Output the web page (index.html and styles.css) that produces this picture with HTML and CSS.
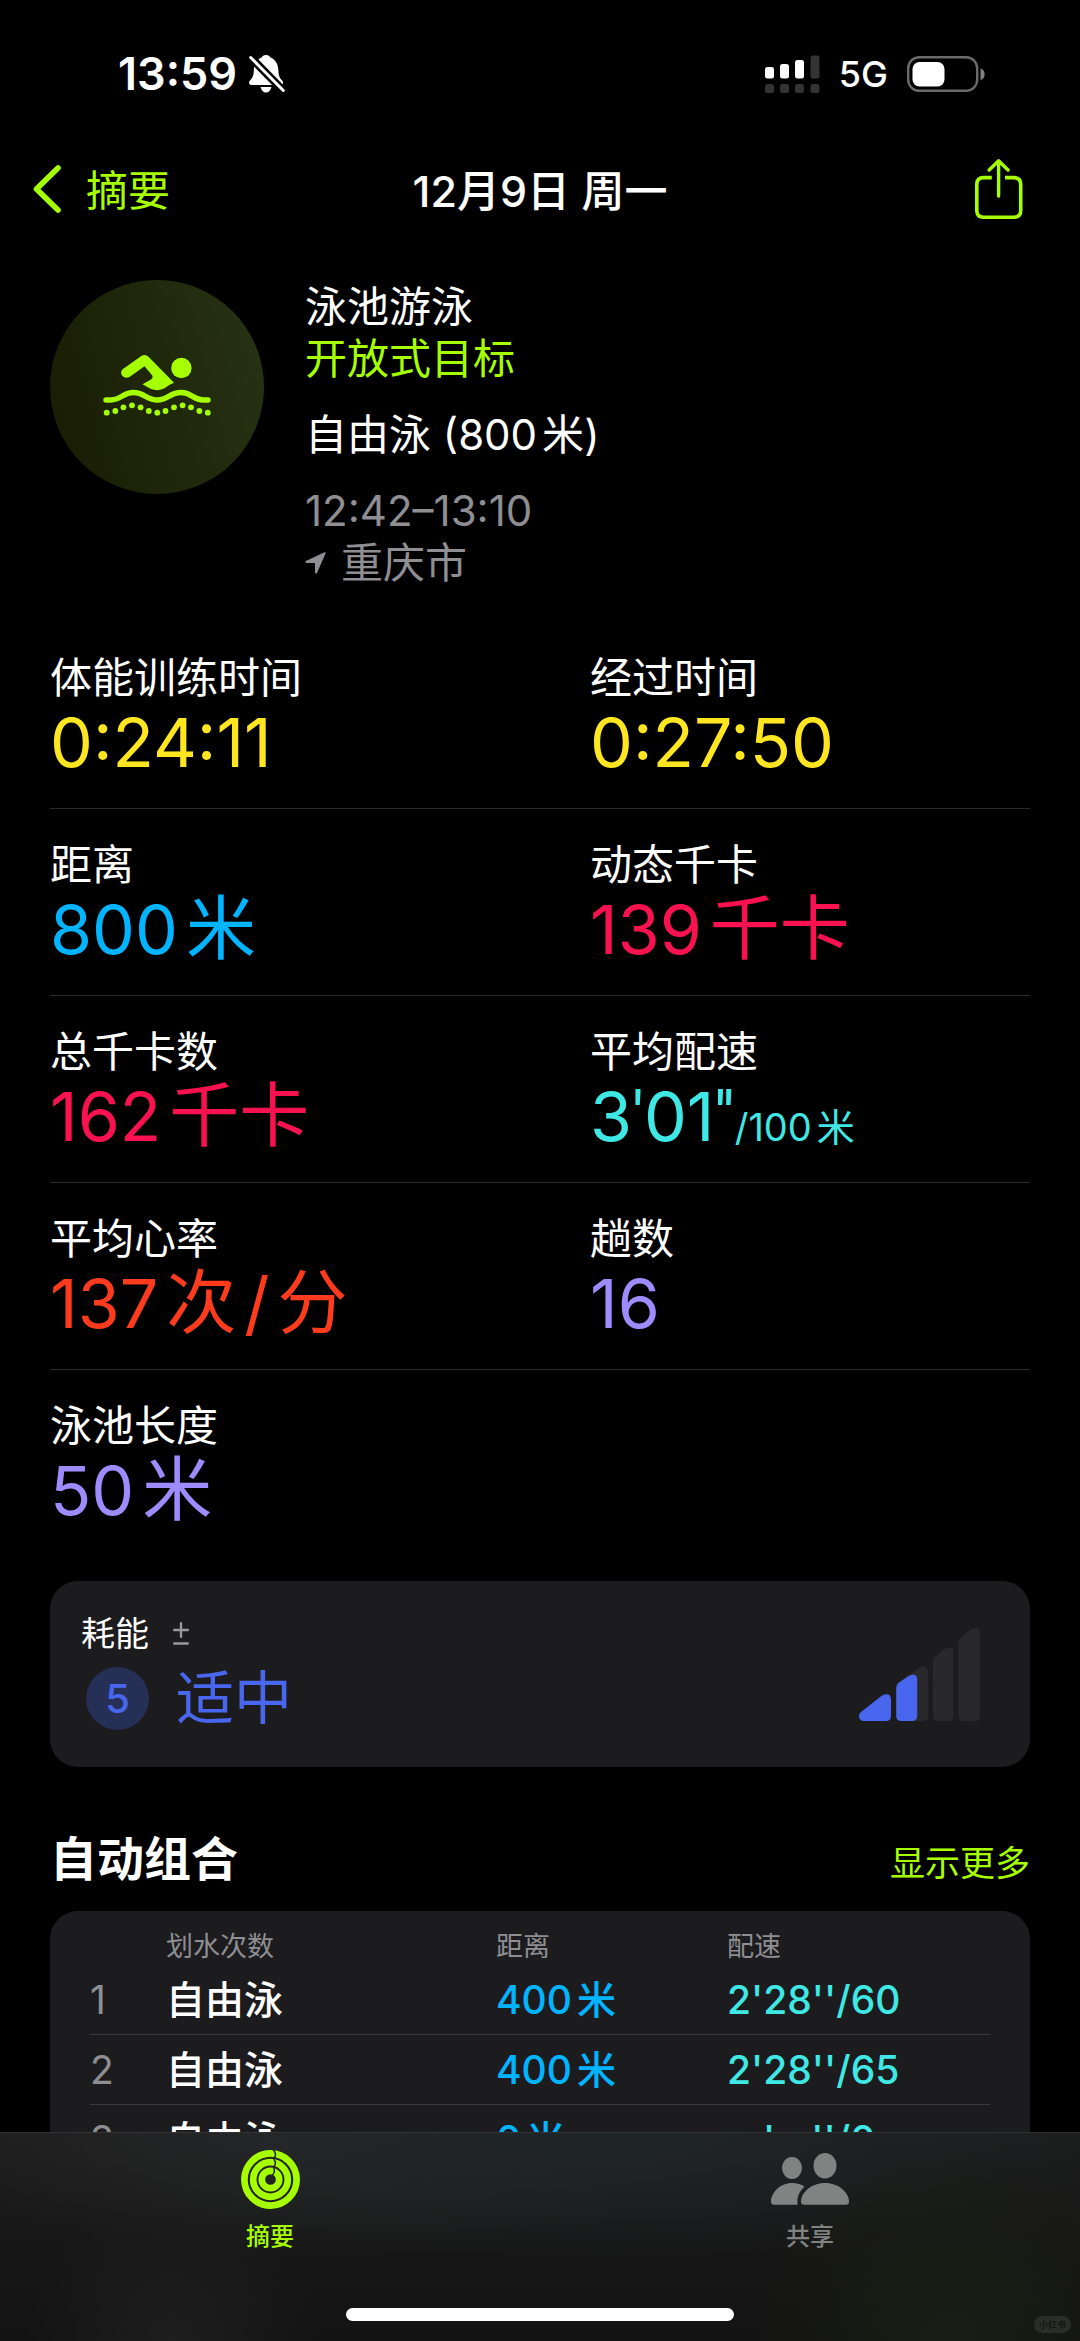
FILE: index.html
```html
<!DOCTYPE html>
<html lang="zh-CN">
<head>
<meta charset="utf-8">
<meta name="viewport" content="width=device-width, initial-scale=1">
<title>12月9日 周一</title>
<link rel="stylesheet" href="styles.css">
</head>
<body>
<div class="app">
  <div class="status">
    <div class="status-side">
      <span class="clock">13:59</span>
      <svg width="36" height="38" viewBox="0 0 36 38" aria-hidden="true">
        <path d="M17 0c3 0 4 1.500 4.500 2.500 5 2 7.500 6.500 7.800 12 .3 6 1.200 8.500 3.800 11 1.500 1.500 1.400 4.500-1.300 4.500H2.500C-.5 30-.4 27 1 25.500c2.600-2.500 3.700-5 3.900-11 .2-5.500 3-10 7.600-12C13 1.500 14 0 17 0z" fill="#fff"/>
        <path d="M11.500 32h11c-.8 3.500-2.800 5.500-5.500 5.500s-4.700-2-5.500-5.500z" fill="#fff"/>
        <path d="M-1 -0.500L37 38.500" stroke="#000" stroke-width="8"/>
        <path d="M1.700 2.500L34.300 35.500" stroke="#fff" stroke-width="3" stroke-linecap="round"/>
      </svg>
    </div>
    <div class="status-side status-right">
      <svg width="55" height="39" viewBox="0 0 55 39" aria-hidden="true">
        <g fill="#fff"><rect y="12" width="9" height="11.500" rx="2.500"/><rect x="15" y="9" width="9" height="14.500" rx="2.500"/><rect x="30" y="5" width="9" height="18.500" rx="2.500"/></g>
        <g fill="#333"><rect x="45.500" y="0.500" width="9" height="23" rx="2.500"/><rect y="29" width="9" height="9" rx="2.500"/><rect x="15" y="29" width="9" height="9" rx="2.500"/><rect x="30" y="29" width="9" height="9" rx="2.500"/><rect x="45.500" y="29" width="9" height="9" rx="2.500"/></g>
      </svg>
      <span class="network">5G</span>
      <svg width="79" height="36" viewBox="0 0 79 36" aria-hidden="true">
        <rect x="1.200" y="1.200" width="69" height="33.600" rx="11" fill="none" stroke="#6a6a6a" stroke-width="2.400"/>
        <rect x="5.500" y="6" width="32" height="24.500" rx="7" fill="#fff"/>
        <path d="M73.500 12.500c5.500 1 5.500 10.500 0 11.500z" fill="#808080"/>
      </svg>
    </div>
  </div>

  <header class="nav">
    <button class="back" type="button">
      <svg width="28" height="48" viewBox="0 0 28 48" aria-hidden="true"><path d="M25 3L3.500 24 25 45" fill="none" stroke="currentColor" stroke-width="5.600" stroke-linecap="round" stroke-linejoin="round"/></svg>
      <span>摘要</span>
    </button>
    <h1 class="title">12月9日 周一</h1>
    <button class="share" type="button" aria-label="分享">
      <svg width="48" height="60" viewBox="0 0 48 60" fill="none" stroke="currentColor" aria-hidden="true"><path d="M16.800 18.600H8.500Q1.800 18.600 1.800 25.500V51.500Q1.800 58.200 8.500 58.200H39Q45.700 58.200 45.700 51.500V25.500Q45.700 18.600 39 18.600H30" stroke-width="3.600"/><path d="M23.600 2V37M14.200 11L23.600 1.800 33 11" stroke-width="3.400" stroke-linecap="round" stroke-linejoin="round"/></svg>
    </button>
  </header>

  <main class="content">
    <section class="workout">
      <div class="avatar">
        <svg width="108" height="62" viewBox="0 0 108 62" aria-hidden="true">
          <g fill="#a6ff00">
            <circle cx="78.400" cy="14" r="10.200"/>
            <path d="M38 2.200Q42-.6 46 3.200L71 28.700Q65 31 62 34 55 38 47 34.500L39.500 30.300 48 25.500Q51 23.500 48.500 20.500L41.500 12.200 26.500 23Q22 25 19 21.500 16.800 17.500 20 15z"/>
            <circle cx="3.700" cy="58.700" r="2.900"/><circle cx="12.300" cy="57" r="2.900"/><circle cx="20.400" cy="53.300" r="2.900"/><circle cx="29" cy="51.300" r="2.900"/><circle cx="37.600" cy="53.300" r="2.900"/><circle cx="45.800" cy="57" r="2.900"/><circle cx="54.300" cy="58.700" r="2.900"/><circle cx="62.500" cy="57" r="2.900"/><circle cx="71" cy="53.300" r="2.900"/><circle cx="79.600" cy="51.300" r="2.900"/><circle cx="88" cy="53.300" r="2.900"/><circle cx="96.400" cy="57" r="2.900"/><circle cx="104.800" cy="58.700" r="2.900"/>
          </g>
          <path d="M3 46H8C18 46 20 38.500 30.500 38.500S44 46 54.300 46 67 38.500 78 38.500 90 46 100 46H105" fill="none" stroke="#a6ff00" stroke-width="5.400" stroke-linecap="round"/>
        </svg>
      </div>
      <div class="facts">
        <p>泳池游泳</p>
        <p class="lime">开放式目标</p>
        <p class="fact-gap">自由泳 (800<span class="unit-s">米</span>)</p>
        <p class="fact-gap muted">12:42–13:10</p>
        <p class="muted place">
          <svg width="21" height="22" viewBox="0 0 21 22" aria-hidden="true"><path d="M19.500.3Q21 0 20.500 1.500L12 21Q10.500 22.500 10 20.500V11.500Q10 11 9.500 11H1.200Q-.5 10.500.8 9z" fill="currentColor"/></svg>
          <span>重庆市</span>
        </p>
      </div>
    </section>

    <dl class="stats">
      <div class="stat-row">
        <div><dt>体能训练时间</dt><dd class="yellow">0:24:11</dd></div>
        <div><dt>经过时间</dt><dd class="yellow">0:27:50</dd></div>
      </div>
      <div class="stat-row">
        <div><dt>距离</dt><dd class="blue">800<span class="unit">米</span></dd></div>
        <div><dt>动态千卡</dt><dd class="pink">139<span class="unit">千卡</span></dd></div>
      </div>
      <div class="stat-row">
        <div><dt>总千卡数</dt><dd class="pink">162<span class="unit">千卡</span></dd></div>
        <div><dt>平均配速</dt><dd class="cyan">3<span class="prime">'</span>01<span class="prime">''</span><small>/100<span class="unit-s">米</span></small></dd></div>
      </div>
      <div class="stat-row">
        <div><dt>平均心率</dt><dd class="red">137<span class="unit">次</span><span class="unit">/</span><span class="unit">分</span></dd></div>
        <div><dt>趟数</dt><dd class="violet">16</dd></div>
      </div>
      <div class="stat-row">
        <div><dt>泳池长度</dt><dd class="violet">50<span class="unit">米</span></dd></div>
      </div>
    </dl>

    <section class="card effort">
      <div>
        <h2 class="effort-title">耗能
          <svg width="16" height="24" viewBox="0 0 16 24" aria-hidden="true"><path d="M1.200 8H14.800M8 1.200V14.800M1.200 21.500H14.800" stroke="#98989f" stroke-width="2.400" stroke-linecap="round"/></svg>
        </h2>
        <div class="effort-value"><span class="level">5</span><span>适中</span></div>
      </div>
      <svg width="121" height="93" viewBox="0 0 121 93" aria-hidden="true">
        <g fill="#29292b">
          <path d="M37.200 57L58 41Q69.200 35 69.200 45V88Q69.200 93 64 93H42Q37.200 93 37.200 88z"/>
          <path d="M74 34Q74 30 77 28L86 21Q94.400 17 94.400 25V88Q94.400 93 89 93H79Q74 93 74 88z"/>
          <path d="M99.500 15Q99.500 11 102.500 9L112 1.500Q121-2.500 121 6V88Q121 93 116 93H105Q99.500 93 99.500 88z"/>
        </g>
        <g fill="#4966ef">
          <path d="M2 84L23 67.500Q32 63.500 32 72V88Q32 93 27 93H5Q0 93 0 88 0 85.500 2 84z"/>
          <path d="M37.200 61Q37.200 56.500 40 54.500L49.500 48Q58.200 44 58.200 52V88Q58.200 93 53 93H42.500Q37.200 93 37.200 88z"/>
        </g>
      </svg>
    </section>

    <div class="section-head">
      <h2 class="section-title">自动组合</h2>
      <a class="more" href="#sets">显示更多</a>
    </div>

    <section class="card sets" id="sets">
      <table>
        <colgroup><col class="col-index"><col class="col-stroke"><col class="col-distance"><col></colgroup>
        <thead><tr><td></td><th scope="col">划水次数</th><th scope="col">距离</th><th scope="col">配速</th></tr></thead>
        <tbody>
          <tr><td class="index">1</td><td>自由泳</td><td class="blue">400<span class="unit-s">米</span></td><td class="cyan">2'28''/60</td></tr>
          <tr><td class="index">2</td><td>自由泳</td><td class="blue">400<span class="unit-s">米</span></td><td class="cyan">2'28''/65</td></tr>
          <tr><td class="index">3</td><td>自由泳</td><td class="blue">0<span class="unit-s">米</span></td><td class="cyan">--'--''/0</td></tr>
        </tbody>
      </table>
    </section>
  </main>

  <nav class="tabs">
    <div class="tab-list">
      <a class="tab lime" href="#summary">
        <svg width="59" height="59" viewBox="0 0 59 59" fill="none" aria-hidden="true">
          <g stroke="currentColor" stroke-width="6.700"><circle cx="29.500" cy="29.500" r="26.100"/><circle cx="29.500" cy="29.500" r="17.300"/><circle cx="29.500" cy="29.500" r="8.700"/></g>
          <path d="M32-.5Q36.500 4 33 8M32.500 9Q36 12.500 33 16.800M32.500 18Q35 21.500 31 25.800" stroke="#222" stroke-width="1.500"/>
        </svg>
        <span>摘要</span>
      </a>
      <a class="tab share-tab" href="#sharing">
        <svg width="78" height="59" viewBox="0 0 78 59" fill="currentColor" aria-hidden="true">
          <ellipse cx="54" cy="15.700" rx="11.500" ry="12.700"/><ellipse cx="21" cy="18" rx="10" ry="11"/>
          <path d="M54 33C68 33 78 43 78 51.500Q78 54.700 75 54.700H33Q30 54.700 30 51.500C30 43 40 33 54 33z"/>
          <path d="M21 33Q28.500 33 33.500 36.500C28 41.500 25.500 48 26.700 54.700H3Q0 54.700 0 51.500C0 43 9 33 21 33z"/>
        </svg>
        <span>共享</span>
      </a>
    </div>
    <div class="home-indicator"></div>
    <span class="badge">小红书</span>
  </nav>
</div>
</body>
</html>
```

FILE: styles.css
```css
* {
  box-sizing: border-box;
}

body,
h1,
h2,
p,
dl,
dd {
  margin: 0;
}

body {
  background: #000;
  color: #fff;
  font-family: Inter, "Noto Sans CJK SC", sans-serif;
  font-size: 42px;
  line-height: 52px;
}

h1,
h2 {
  font-size: inherit;
  font-weight: inherit;
}

svg {
  flex: none;
  display: block;
}

button {
  padding: 0;
  border: 0;
  background: none;
  color: inherit;
  font: inherit;
}

a {
  color: inherit;
  text-decoration: none;
}

.app {
  display: flex;
  flex-direction: column;
  height: 100vh;
  overflow: hidden;
}

/* Colours */
.lime, .back, .share, .more { color: #a6ff00; }
.muted { color: #8e8e93; }
.yellow { color: #ffe620; }
.blue { color: #00b4ff; }
.pink { color: #fa114f; }
.cyan { color: #3fe8e4; }
.red { color: #ff3b1d; }
.violet { color: #9e8cff; }

.unit { margin-left: 8px; font-size: 70px; }
.unit-s { margin-left: 5px; }

/* Minute and second marks sit close to the digits */
.prime { font-family: Roboto, sans-serif; }

/* Status bar */
.status {
  flex: none;
  display: flex;
  justify-content: space-between;
  align-items: center;
  height: 136px;
  padding: 12px 94px 0 118px;
}

.status-side {
  display: flex;
  align-items: center;
  gap: 12px;
}

.status-right {
  gap: 19px;
}

.clock {
  font-size: 45px;
  font-weight: 600;
}

.network {
  font-size: 36px;
  font-weight: 500;
}

/* Navigation bar */
.nav {
  flex: none;
  display: grid;
  grid-template-columns: 1fr auto 1fr;
  align-items: center;
  height: 110px;
  padding: 0 57px 0 33px;
}

.nav svg {
  margin-bottom: 4px;
}

.back {
  justify-self: start;
  display: flex;
  align-items: center;
  gap: 25px;
}

.title {
  padding-left: 24px;
  font-size: 43px;
  font-weight: 500;
}

.share {
  justify-self: end;
}

/* Content */
.content {
  flex: 1;
  min-height: 0;
  overflow: hidden;
  padding: 34px 50px 0;
}

.workout {
  display: flex;
  align-items: flex-start;
  gap: 41px;
}

.avatar {
  flex: none;
  display: flex;
  align-items: center;
  justify-content: center;
  width: 214px;
  height: 214px;
  padding-bottom: 4px;
  border-radius: 50%;
  background: linear-gradient(75deg, #191c02, #1f270b 50%, #283314);
}

.facts {
  padding-top: 1px;
}

.fact-gap {
  margin-top: 24px;
}

.place {
  display: flex;
  align-items: center;
  gap: 15px;
}

.stats {
  margin-top: 33px;
}

.stat-row {
  display: grid;
  grid-template-columns: 1fr 1fr;
  column-gap: 100px;
  padding: 31px 0 25px;
  border-bottom: 1px solid #2a2a2c;
}

.stat-row:last-child {
  border-bottom: 0;
}

.stats dt {
  line-height: 50px;
}

.stats dd {
  height: 80px;
  font-size: 68px;
  line-height: 78px;
  white-space: nowrap;
}

.stats small {
  font-size: 38px;
  line-height: 40px;
}

.card {
  border-radius: 28px;
  background: #1c1c1e;
}

.effort {
  display: flex;
  align-items: center;
  justify-content: space-between;
  height: 186px;
  margin-top: 25px;
  padding: 0 50px 0 31px;
}

.effort-title {
  display: flex;
  align-items: center;
  gap: 24px;
  font-size: 34px;
  line-height: 52px;
}

.effort-value {
  display: flex;
  align-items: center;
  gap: 27px;
  padding: 4px 0 8px 5px;
  color: #4966ef;
  font-size: 58px;
  line-height: 68px;
}

.level {
  width: 63px;
  height: 63px;
  border-radius: 50%;
  background: #262f55;
  font-size: 40px;
  font-weight: 500;
  line-height: 63px;
  text-align: center;
}

.section-head {
  display: flex;
  align-items: flex-end;
  justify-content: space-between;
  margin-top: 64px;
}

.section-title {
  font-size: 47px;
  font-weight: 700;
  line-height: 56px;
}

.more {
  font-size: 35px;
  line-height: 48px;
}

.sets {
  margin-top: 24px;
  padding: 18px 40px;
}

.sets table {
  width: 100%;
  border-collapse: collapse;
  table-layout: fixed;
  text-align: left;
}

.col-index { width: 76px; }
.col-stroke { width: 330px; }
.col-distance { width: 231px; }

.sets th {
  padding: 0;
  color: #8e8e93;
  font-size: 27px;
  font-weight: 400;
  line-height: 36px;
}

.sets td {
  padding: 0;
}

.sets tbody td {
  border-bottom: 1px solid #39393b;
  font-size: 39px;
  font-weight: 500;
  line-height: 69px;
}

.sets tbody .index {
  color: #8e8e93;
  font-weight: 400;
}

/* Tab bar */
.tabs {
  position: relative;
  flex: none;
  display: flex;
  flex-direction: column;
  align-items: center;
  justify-content: space-between;
  height: 209px;
  padding: 17px 0 20px;
  border-top: 1px solid #323233;
  background:
    radial-gradient(circle at 88% 100%, #1a1e13, transparent 20%),
    radial-gradient(circle at 16% 100%, #1e1e1e, transparent 16%),
    radial-gradient(ellipse 50% 60% at 56% 0, #202628, transparent),
    radial-gradient(ellipse 40% 60% at 28% 0, #272727, transparent),
    linear-gradient(#1c1c1c, #131313);
}

.tab-list {
  display: grid;
  grid-template-columns: 1fr 1fr;
  width: 100%;
}

.tab {
  display: flex;
  flex-direction: column;
  align-items: center;
  gap: 12px;
  font-size: 24px;
  font-weight: 500;
  line-height: 32px;
}

.share-tab {
  color: #818383;
}

.home-indicator {
  width: 36%;
  height: 13px;
  border-radius: 7px;
  background: #fff;
}

.badge {
  position: absolute;
  right: 9px;
  bottom: 8px;
  padding: 0 5px;
  border-radius: 9px;
  background: #2b2d28;
  color: #151613;
  font-size: 9px;
  font-weight: 700;
  line-height: 17px;
}
```
